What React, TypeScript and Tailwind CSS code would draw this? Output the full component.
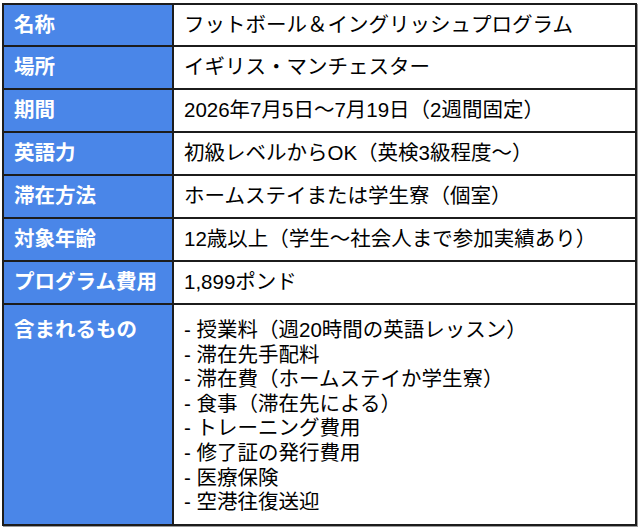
const rows: { label: string; value: string }[] = [
  { label: '名称', value: 'フットボール＆イングリッシュプログラム' },
  { label: '場所', value: 'イギリス・マンチェスター' },
  { label: '期間', value: '2026年7月5日～7月19日（2週間固定）' },
  { label: '英語力', value: '初級レベルからOK（英検3級程度～）' },
  { label: '滞在方法', value: 'ホームステイまたは学生寮（個室）' },
  { label: '対象年齢', value: '12歳以上（学生～社会人まで参加実績あり）' },
  { label: 'プログラム費用', value: '1,899ポンド' },
];

const included = [
  '授業料（週20時間の英語レッスン）',
  '滞在先手配料',
  '滞在費（ホームステイか学生寮）',
  '食事（滞在先による）',
  'トレーニング費用',
  '修了証の発行費用',
  '医療保険',
  '空港往復送迎',
];

export default function App() {
  return (
    <div
      className="w-[640px] h-[531px] bg-white pt-[3px] pl-[2px]"
      style={{ fontFamily: '"Liberation Sans", "Noto Sans CJK JP", sans-serif' }}
    >
      <div className="w-[635px] border-2 border-[#1c1c1c] shadow-[1px_1px_0_#9a9a9a] grid grid-cols-[170px_1fr]">
        {rows.map((r, i) => (
          <div key={r.label} className="contents">
            <div
              className={`bg-[#4a86e8] text-white font-bold text-[20.5px] pl-[10px] flex items-center border-r-2 border-[#1c1c1c] ${
                i === 0 ? 'h-[40px]' : 'h-[43px] border-t-2'
              }`}
            >
              {r.label}
            </div>
            <div
              className={`bg-white text-black text-[20.5px] pl-[10px] flex items-center border-[#1c1c1c] ${
                i === 0 ? 'h-[40px]' : 'h-[43px] border-t-2'
              }`}
            >
              {r.value}
            </div>
          </div>
        ))}
        <div className="bg-[#4a86e8] text-white font-bold text-[20.5px] pl-[10px] pt-[13px] leading-[24.6px] h-[221px] border-t-2 border-r-2 border-[#1c1c1c]">
          含まれるもの
        </div>
        <div className="bg-white text-black text-[20.5px] pl-[10px] pt-[13px] leading-[24.6px] h-[221px] border-t-2 border-[#1c1c1c]">
          {included.map((t) => (
            <div key={t}>- {t}</div>
          ))}
        </div>
      </div>
    </div>
  );
}
